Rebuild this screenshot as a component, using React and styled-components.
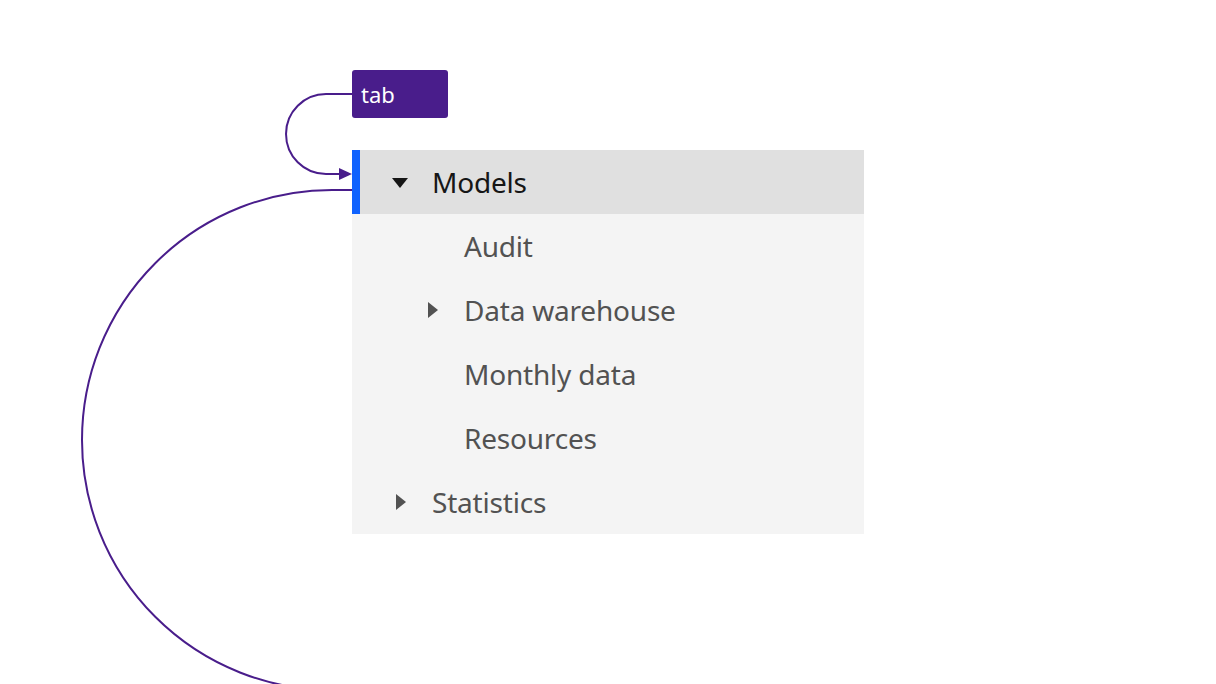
import styled, { createGlobalStyle } from "styled-components";

const GlobalStyle = createGlobalStyle`
    html, body {
        margin: 0;
        padding: 0;
        background: #ffffff;
    }
    body {
        font-family: "Noto Sans", "Liberation Sans", sans-serif;
    }
`;

const Stage = styled.div`
    position: relative;
    width: 1216px;
    height: 684px;
    overflow: hidden;
    padding: 70px 0 0 352px;
    box-sizing: border-box;
    display: flex;
    flex-direction: column;
    align-items: flex-start;
    gap: 32px;
`;

const TabBadge = styled.div`
    width: 96px;
    height: 48px;
    box-sizing: border-box;
    padding-left: 9px;
    display: flex;
    align-items: center;
    background: #491d8b;
    border-radius: 3px;
    color: #ffffff;
    font-size: 22px;
    line-height: 1;
`;

const Tree = styled.ul`
    list-style: none;
    margin: 0;
    padding: 0;
    width: 512px;
    background: #f4f4f4;
`;

const Node = styled.li`
    position: relative;
    height: 64px;
    display: flex;
    align-items: center;
    padding-left: ${(p) => (p.$level === 1 ? 32 : 64)}px;
    background: ${(p) => (p.$selected ? "#e0e0e0" : "transparent")};
    color: ${(p) => (p.$selected ? "#161616" : "#525252")};
    font-size: 28px;
    line-height: 64px;

    &::before {
        content: "";
        display: ${(p) => (p.$selected ? "block" : "none")};
        position: absolute;
        left: 0;
        top: 0;
        bottom: 0;
        width: 8px;
        background: #0f62fe;
    }
`;

const CaretSlot = styled.span`
    width: 32px;
    height: 32px;
    flex: none;
    margin-right: 16px;
    display: flex;

    svg {
        width: 32px;
        height: 32px;
        fill: currentColor;
    }
`;

const Label = styled.span`
    white-space: nowrap;
    letter-spacing: -0.2px;
`;

const Connectors = styled.svg`
    position: absolute;
    left: 0;
    top: 0;
    width: 1216px;
    height: 684px;
    pointer-events: none;
    overflow: visible;
`;

const Caret = ({ open }) =>
    open ? (
        <svg viewBox="0 0 32 32">
            <path d="M24 12L16 22 8 12z" />
        </svg>
    ) : (
        <svg viewBox="0 0 32 32">
            <path d="M12 8L22 16 12 24z" />
        </svg>
    );

const nodes = [
    { label: "Models", level: 1, caret: "open", selected: true },
    { label: "Audit", level: 2 },
    { label: "Data warehouse", level: 2, caret: "closed" },
    { label: "Monthly data", level: 2 },
    { label: "Resources", level: 2 },
    { label: "Statistics", level: 1, caret: "closed" },
];

const App = () => {
    return (
        <>
            <GlobalStyle />
            <Stage>
                <TabBadge>tab</TabBadge>
                <Tree>
                    {nodes.map((n) => (
                        <Node key={n.label} $level={n.level} $selected={n.selected}>
                            {n.caret ? (
                                <CaretSlot>
                                    <Caret open={n.caret === "open"} />
                                </CaretSlot>
                            ) : (
                                <CaretSlot />
                            )}
                            <Label>{n.label}</Label>
                        </Node>
                    ))}
                </Tree>
                <Connectors viewBox="0 0 1216 684">
                    <path
                        d="M352 94 H326 A40 40 0 0 0 326 174 H340"
                        fill="none"
                        stroke="#491d8b"
                        strokeWidth="2"
                    />
                    <polygon points="339,168 352,174 339,180" fill="#491d8b" />
                    <path
                        d="M352 190 H332 A250 250 0 0 0 332 690"
                        fill="none"
                        stroke="#491d8b"
                        strokeWidth="2"
                    />
                </Connectors>
            </Stage>
        </>
    );
};

export default App;
